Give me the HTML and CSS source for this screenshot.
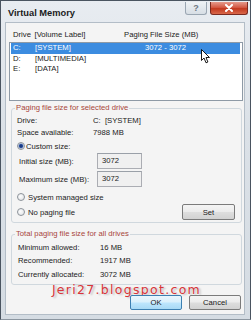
FILE: index.html
```html
<!DOCTYPE html>
<html>
<head>
<meta charset="utf-8">
<link rel="stylesheet" href="styles.css">
</head>
<body>
<div class="win">
  <div class="titlebar">
    <span class="title">Virtual Memory</span>
    <div class="caption-btns">
      <span class="cap-help">?</span>
      <span class="cap-close"><svg width="10" height="8" viewBox="0 0 10 8"><path d="M2 1 L8 7 M8 1 L2 7" stroke="#fff" stroke-width="2" stroke-linecap="round"/></svg></span>
    </div>
  </div>
  <div class="client">
    <div class="list-head">
      <span class="h1">Drive</span><span class="h2">[Volume Label]</span><span class="h3">Paging File Size (MB)</span>
    </div>
    <div class="listbox">
      <div class="row sel"><span>C:</span><span>[SYSTEM]</span><span>3072 - 3072</span></div>
      <div class="row"><span>D:</span><span>[MULTIMEDIA]</span><span></span></div>
      <div class="row"><span>E:</span><span>[DATA]</span><span></span></div>
    </div>
    <fieldset class="group g1">
      <legend>Paging file size for selected drive</legend>
      <div class="info"><span class="lbl">Drive:</span><span>C:&nbsp;&nbsp;[SYSTEM]</span></div>
      <div class="info"><span class="lbl">Space available:</span><span>7988 MB</span></div>
      <div class="radio-row custom"><span class="radio on"></span><span>Custom size:</span></div>
      <div class="field"><span class="flbl">Initial size (MB):</span><span class="input">3072</span></div>
      <div class="field max"><span class="flbl">Maximum size (MB):</span><span class="input">3072</span></div>
      <div class="radio-row sysman"><span class="radio"></span><span>System managed size</span></div>
      <div class="radio-row nopage"><span class="radio"></span><span class="grow">No paging file</span><span class="btn set">Set</span></div>
    </fieldset>
    <fieldset class="group g2">
      <legend>Total paging file size for all drives</legend>
      <div class="total"><span class="tlbl">Minimum allowed:</span><span>16 MB</span></div>
      <div class="total"><span class="tlbl">Recommended:</span><span>1917 MB</span></div>
      <div class="total"><span class="tlbl">Currently allocated:</span><span>3072 MB</span></div>
    </fieldset>
    <div class="watermark">Jeri27.blogspot.com</div>
    <div class="buttons">
      <span class="btn ok">OK</span>
      <span class="btn">Cancel</span>
    </div>
  </div>
  <svg class="cursor" width="10" height="15" viewBox="0 0 10 15"><path d="M0.5 0.5 L0.5 11.5 L3 9 L5 13.8 L6.9 13 L5 8.5 L8.5 8.5 Z" fill="#fff" stroke="#000" stroke-width="0.9" stroke-linejoin="round"/></svg>
</div>
</body>
</html>
```

FILE: styles.css
```css
* { box-sizing: border-box; }
html, body { margin: 0; padding: 0; }
body {
  width: 251px;
  height: 320px;
  overflow: hidden;
  font-family: "Liberation Sans", Arial, sans-serif;
  font-size: 7.7px;
  color: #222;
}
.win {
  position: relative;
  width: 251px;
  height: 320px;
  border: 1px solid #4a5460;
  border-bottom: 1px solid #8c96a0;
  background: linear-gradient(180deg, #e8ecf1 0%, #dbe1e7 40%, #d5dce3 100%);
  display: flex;
  flex-direction: column;
}
.titlebar {
  height: 21px;
  display: flex;
  align-items: center;
  padding-left: 7px;
  position: relative;
}
.title {
  font-weight: bold;
  font-size: 9.3px;
  color: #1b1b1b;
  padding-top: 3px;
}
.caption-btns {
  margin-left: auto;
  align-self: flex-start;
  margin-top: 1px;
  margin-right: 2px;
  display: flex;
  gap: 3px;
}
.cap-help {
  width: 22px;
  height: 13px;
  border: 1px solid #9aa6b2;
  border-top: none;
  border-radius: 0 0 3px 3px;
  background: linear-gradient(180deg, #eef2f5, #d7dee5);
  color: #6d7782;
  font-weight: bold;
  font-size: 9px;
  display: flex;
  align-items: center;
  justify-content: center;
}
.cap-close {
  width: 38px;
  height: 13px;
  border: 1px solid #7a2a20;
  border-top: none;
  border-radius: 0 0 3px 3px;
  background: linear-gradient(180deg, #e59a8c 0%, #d45a45 45%, #c2391f 55%, #d9684a 100%);
  display: flex;
  align-items: center;
  justify-content: center;
}
.client {
  flex: 1;
  margin: 0 5px 4px 4px;
  border: 1px solid #b3bdc7;
  background: #f4f4f4;
  display: flex;
  flex-direction: column;
  padding-bottom: 4px;
}
.list-head {
  padding: 7px 0 0 7px;
  height: 17px;
  line-height: 10px;
  display: grid;
  grid-template-columns: 21.5px 89.5px auto;
  white-space: nowrap;
}
.listbox {
  margin: 2px 1px 0 3px;
  height: 59px;
  border: 1px solid #8e9aa6;
  background: #fff;
  padding: 0 1px;
}
.row {
  height: 10.5px;
  line-height: 10.5px;
  padding-left: 2px;
  display: grid;
  grid-template-columns: 22px 110px auto;
  white-space: nowrap;
}
.row.sel {
  background: #3c8ce0;
  color: #fff;
  margin-right: 1px;
}
.group {
  margin: 2px 2px 0 5px;
  padding: 2px 6px 2px 5px;
  border: 1px solid #d0d8de;
  border-radius: 3px;
  min-width: 0;
}
.group legend {
  padding: 0 1px;
  margin-left: -2px;
  line-height: 10px;
  color: #a8453b;
}
.info {
  height: 12px;
  line-height: 12px;
  display: flex;
}
.lbl { width: 76px; }
.radio-row {
  display: flex;
  align-items: center;
  height: 14px;
}
.radio {
  width: 8px;
  height: 8px;
  border-radius: 50%;
  border: 1px solid #8d939a;
  background: radial-gradient(circle at 40% 40%, #fdfdfd, #dcdfe3);
  margin-right: 3px;
  flex: none;
}
.radio.on {
  background: radial-gradient(circle, #0e2a6a 0, #2a4f9c 1.6px, #b9c6de 2.6px, #eef1f5 3.5px);
  margin-right: 1px;
}
.custom { height: 14px; }
.field {
  display: flex;
  align-items: center;
  height: 16px;
  padding-left: 2px;
}
.field.max { margin-top: 2px; }
.flbl { width: 78px; }
.input {
  width: 45px;
  height: 16px;
  border: 1px solid #abadb3;
  border-top-color: #9aa0a8;
  background: #f0f0f0;
  padding: 1px 0 0 4px;
  line-height: 11px;
}
.sysman { margin-top: 3px; }
.nopage { height: 16px; }
.grow { flex: 1; }
.btn {
  display: flex;
  align-items: center;
  justify-content: center;
  width: 53px;
  height: 16px;
  border: 1px solid #7b7b7b;
  border-radius: 2px;
  background: linear-gradient(180deg, #f4f4f4 0%, #ececec 48%, #dedede 52%, #d2d2d2 100%);
  color: #1a1a1a;
}
.g2 {
  margin-top: 6px;
  padding: 1.5px 6px 3px 6px;
}
.g2 legend { margin-left: -3px; }
.total {
  height: 13.5px;
  line-height: 13.5px;
  display: flex;
}
.tlbl { width: 82px; }
.watermark {
  height: 10px;
  line-height: 10px;
  text-align: center;
  padding-left: 3px;
  font-family: "DejaVu Sans", Verdana, sans-serif;
  font-size: 12.5px;
  letter-spacing: 1.3px;
  color: #d8353a;
  text-shadow: 2px 1px 2px rgba(0,0,0,0.22);
  white-space: nowrap;
}
.buttons {
  display: flex;
  justify-content: flex-end;
  gap: 7px;
  margin-right: 3px;
  height: 15px;
}
.buttons .btn { width: 52px; height: 15px; }
.btn.ok {
  border-color: #3c7fb1;
  background: linear-gradient(180deg, #eaf6fd 0%, #d9f0fc 48%, #bee6fd 52%, #a7d9f5 100%);
}
.cursor {
  position: absolute;
  left: 200px;
  top: 48px;
}
```
